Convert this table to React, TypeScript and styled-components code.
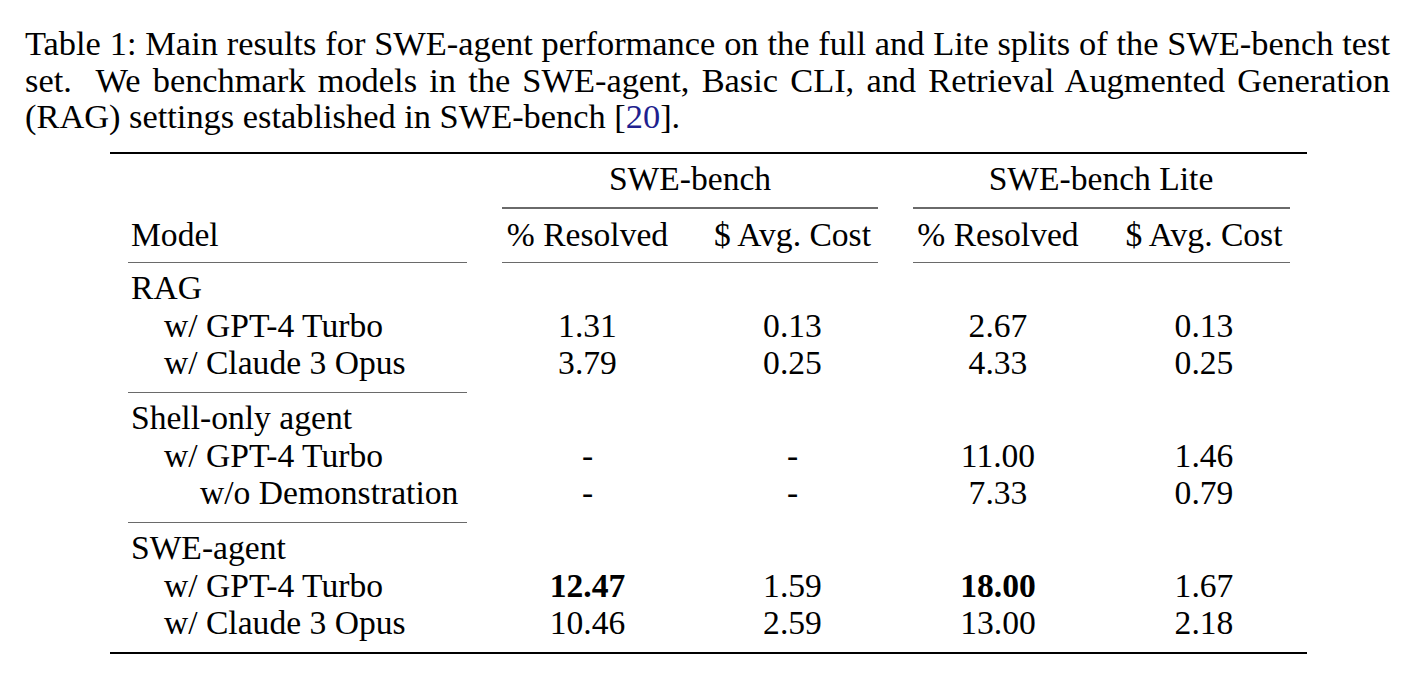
import React from 'react';
import styled, { createGlobalStyle } from 'styled-components';

const GlobalStyle = createGlobalStyle`
  html, body {
    margin: 0;
    padding: 0;
    background: #fff;
  }
`;

const Page = styled.div`
  width: 1420px;
  height: 676px;
  padding-top: 25px;
  box-sizing: border-box;
  overflow: hidden;
  font-family: "Liberation Serif", "Times New Roman", Times, serif;
  color: #000;
`;

const Caption = styled.div`
  margin-left: 25px;
  width: 1365px;
  font-size: 34.4px;
  line-height: 36.5px;
`;

const CaptionLine = styled.div<{ $justify?: boolean }>`
  text-align: ${p => (p.$justify ? 'justify' : 'left')};
  text-align-last: ${p => (p.$justify ? 'justify' : 'left')};
`;

const Cite = styled.span`
  color: #1f1f8f;
`;

const Table = styled.div`
  margin: 17px 0 0 110px;
  width: 1197px;
  font-size: 33.6px;
`;

const HeavyRule = styled.div`
  height: 2.5px;
  background: #000;
`;

const Grid = styled.div<{ $pt: number; $pb: number }>`
  display: grid;
  grid-template-columns: 375px 205px 205px 206px 206px;
  padding: ${p => p.$pt}px 0 ${p => p.$pb}px;
  line-height: 37.3px;
`;

const RuleRow = styled.div`
  display: grid;
  grid-template-columns: 375px 205px 205px 206px 206px;
  height: 1.5px;
`;

const Segment = styled.div<{ $col: string; $l: number; $r: number }>`
  grid-column: ${p => p.$col};
  margin: 0 ${p => p.$r}px 0 ${p => p.$l}px;
  background: #6a6a6a;
`;

const GroupHead = styled.div<{ $col: string }>`
  grid-column: ${p => p.$col};
  text-align: center;
`;

const ModelCell = styled.div<{ $level: number }>`
  grid-column: 1;
  padding-left: ${p => [21, 54, 90][p.$level]}px;
  white-space: nowrap;
`;

const Cell = styled.div<{ $bold?: boolean }>`
  text-align: center;
  font-weight: ${p => (p.$bold ? 700 : 400)};
  white-space: nowrap;
`;

type Row = { label: string; level: number; vals: string[]; bold?: number[] };
type Group = { name: string; rows: Row[] };

const groups: Group[] = [
  {
    name: 'RAG',
    rows: [
      { label: 'w/ GPT-4 Turbo', level: 1, vals: ['1.31', '0.13', '2.67', '0.13'] },
      { label: 'w/ Claude 3 Opus', level: 1, vals: ['3.79', '0.25', '4.33', '0.25'] },
    ],
  },
  {
    name: 'Shell-only agent',
    rows: [
      { label: 'w/ GPT-4 Turbo', level: 1, vals: ['-', '-', '11.00', '1.46'] },
      { label: 'w/o Demonstration', level: 2, vals: ['-', '-', '7.33', '0.79'] },
    ],
  },
  {
    name: 'SWE-agent',
    rows: [
      { label: 'w/ GPT-4 Turbo', level: 1, vals: ['12.47', '1.59', '18.00', '1.67'], bold: [0, 2] },
      { label: 'w/ Claude 3 Opus', level: 1, vals: ['10.46', '2.59', '13.00', '2.18'] },
    ],
  },
];

function App() {
  return (
    <Page>
      <GlobalStyle />
      <Caption>
        <CaptionLine $justify>
          Table 1: Main results for SWE-agent performance on the full and Lite splits of the SWE-bench test
        </CaptionLine>
        <CaptionLine $justify>
          set.&nbsp; We benchmark models in the SWE-agent, Basic CLI, and Retrieval Augmented Generation
        </CaptionLine>
        <CaptionLine>
          (RAG) settings established in SWE-bench [<Cite>20</Cite>].
        </CaptionLine>
      </Caption>

      <Table>
        <HeavyRule />
        <Grid $pt={6.2} $pb={10}>
          <ModelCell $level={0} />
          <GroupHead $col="2 / span 2">SWE-bench</GroupHead>
          <GroupHead $col="4 / span 2">SWE-bench Lite</GroupHead>
        </Grid>
        <RuleRow>
          <Segment $col="2 / span 2" $l={17} $r={17} />
          <Segment $col="4 / span 2" $l={18} $r={17} />
        </RuleRow>
        <Grid $pt={7.2} $pb={8.5}>
          <ModelCell $level={0}>Model</ModelCell>
          <Cell>% Resolved</Cell>
          <Cell>$ Avg. Cost</Cell>
          <Cell>% Resolved</Cell>
          <Cell>$ Avg. Cost</Cell>
        </Grid>
        <RuleRow>
          <Segment $col="1" $l={18} $r={18} />
          <Segment $col="2 / span 2" $l={17} $r={17} />
          <Segment $col="4 / span 2" $l={18} $r={17} />
        </RuleRow>

        {groups.map((group, gi) => (
          <React.Fragment key={group.name}>
            <Grid $pt={6} $pb={10.6}>
              <ModelCell $level={0}>{group.name}</ModelCell>
              <Cell />
              <Cell />
              <Cell />
              <Cell />
              {group.rows.map(row => (
                <React.Fragment key={row.label + row.level}>
                  <ModelCell $level={row.level}>{row.label}</ModelCell>
                  {row.vals.map((v, i) => (
                    <Cell key={i} $bold={row.bold?.includes(i)}>
                      {v}
                    </Cell>
                  ))}
                </React.Fragment>
              ))}
            </Grid>
            {gi < groups.length - 1 ? (
              <RuleRow>
                <Segment $col="1" $l={18} $r={18} />
              </RuleRow>
            ) : (
              <HeavyRule />
            )}
          </React.Fragment>
        ))}
      </Table>
    </Page>
  );
}

export default App;
